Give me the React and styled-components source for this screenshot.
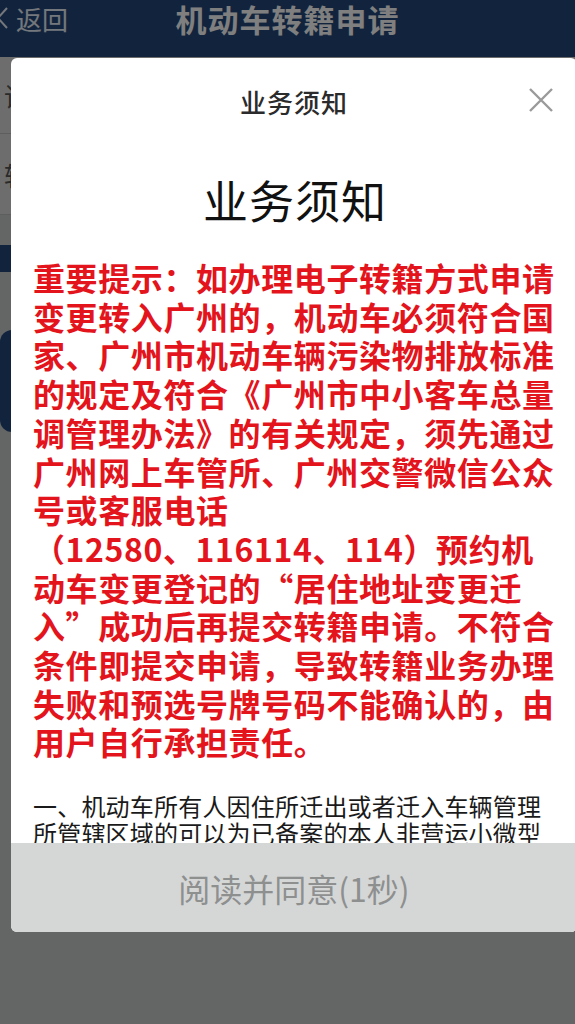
import React from "react";
import styled, { createGlobalStyle } from "styled-components";

const GlobalStyle = createGlobalStyle`
  html, body {
    margin: 0;
    padding: 0;
    height: 100%;
    overflow: hidden;
  }
  body {
    font-family: "Noto Sans CJK SC", "Noto Sans", sans-serif;
    background: #c9cbcb;
  }
`;

const Page = styled.div`
  width: 575px;
  height: 1024px;
  background: #c9cbcb;
  overflow: hidden;
  position: relative;
`;

const TopBar = styled.div`
  height: 57px;
  background: #24487a;
  display: flex;
  align-items: center;
  justify-content: center;
  position: relative;
  color: #ffffff;
`;

const Back = styled.div`
  position: absolute;
  left: -4px;
  top: 0;
  height: 36px;
  display: flex;
  align-items: center;
  gap: 6px;
  font-size: 26px;
  color: #e8eef7;
`;

const PageTitle = styled.h1`
  margin: 0 0 0 0;
  margin-top: -20px;
  font-size: 31px;
  font-weight: 700;
  letter-spacing: 1px;
  color: #ffffff;
`;

const Row = styled.div`
  height: ${(p) => p.h}px;
  background: #dadada;
  border-bottom: 1px solid #bcbcbc;
  display: flex;
  align-items: center;
  padding-left: 4px;
  font-size: 26px;
  color: #555;
`;

const Band = styled.div`
  height: 27px;
  margin-top: 30px;
  background: #24487a;
`;

const PageButton = styled.div`
  height: 102px;
  margin-top: 58px;
  background: #24487a;
  border-radius: 12px;
`;

const Overlay = styled.div`
  position: absolute;
  inset: 0;
  background: rgba(0, 0, 0, 0.5);
`;

const Modal = styled.div`
  position: absolute;
  left: 11px;
  top: 58px;
  width: 566px;
  height: 874px;
  background: #ffffff;
  border-radius: 6px;
  display: flex;
  flex-direction: column;
  overflow: hidden;
`;

const ModalHead = styled.div`
  height: 86px;
  flex-shrink: 0;
  display: flex;
  align-items: center;
  justify-content: center;
  position: relative;
`;

const ModalTitle = styled.div`
  font-size: 26px;
  font-weight: 500;
  color: #2b2b2b;
  letter-spacing: 1px;
  margin-top: 0px;
`;

const Close = styled.div`
  position: absolute;
  right: 22px;
  top: 28px;
  width: 28px;
  height: 28px;
`;

const Body = styled.div`
  flex: 1;
  overflow: hidden;
  padding: 0 20px 0 22px;
`;

const BigTitle = styled.h2`
  margin: 26px 0 0 0;
  text-align: center;
  font-size: 45px;
  line-height: 60px;
  font-weight: 400;
  color: #111;
  letter-spacing: 1px;
`;

const Notice = styled.div`
  margin-top: 28px;
  color: #e3141c;
  font-size: 32px;
  font-weight: 700;
  line-height: 38.7px;
  letter-spacing: 0.6px;
`;

const Line = styled.div`
  white-space: nowrap;
  margin-left: ${(p) => p.indent || 0}px;
`;

const Text = styled.div`
  margin-top: 31px;
  font-size: 24px;
  line-height: 27px;
  color: #1a1a1a;
  letter-spacing: 0.2px;
`;

const Agree = styled.button`
  flex-shrink: 0;
  height: 89px;
  border: none;
  background: #d5d7d7;
  color: #8e8f8f;
  font-family: inherit;
  font-size: 32px;
  font-weight: 400;
  display: flex;
  align-items: center;
  justify-content: center;
  padding: 0;
`;

const notice = [
  "重要提示：如办理电子转籍方式申请",
  "变更转入广州的，机动车必须符合国",
  "家、广州市机动车辆污染物排放标准",
  "的规定及符合《广州市中小客车总量",
  "调管理办法》的有关规定，须先通过",
  "广州网上车管所、广州交警微信公众",
  "号或客服电话",
  "（12580、116114、114）预约机",
  "动车变更登记的“居住地址变更迁",
  "入”成功后再提交转籍申请。不符合",
  "条件即提交申请，导致转籍业务办理",
  "失败和预选号牌号码不能确认的，由",
  "用户自行承担责任。",
];

const body = [
  "一、机动车所有人因住所迁出或者迁入车辆管理",
  "所管辖区域的可以为已备案的本人非营运小微型",
];

export default function App() {
  return (
    <>
      <GlobalStyle />
      <Page>
        <TopBar>
          <Back>
            <svg width="14" height="24" viewBox="0 0 14 24">
              <path d="M11 2 L2 12 L11 22" fill="none" stroke="#e8eef7" strokeWidth="2" />
            </svg>
            返回
          </Back>
          <PageTitle>机动车转籍申请</PageTitle>
        </TopBar>
        <Row h={76}>请</Row>
        <Row h={80}>转</Row>
        <Band />
        <PageButton />
        <Overlay />
        <Modal>
          <ModalHead>
            <ModalTitle>业务须知</ModalTitle>
            <Close>
              <svg width="28" height="28" viewBox="0 0 28 28">
                <path d="M3 3 L25 25 M25 3 L3 25" stroke="#9a9a9a" strokeWidth="2.4" />
              </svg>
            </Close>
          </ModalHead>
          <Body>
            <BigTitle>业务须知</BigTitle>
            <Notice>
              {notice.map((t, i) => (
                <Line key={i}>{t}</Line>
              ))}
            </Notice>
            <Text>
              {body.map((t, i) => (
                <Line key={i}>{t}</Line>
              ))}
            </Text>
          </Body>
          <Agree>阅读并同意(1秒)</Agree>
        </Modal>
      </Page>
    </>
  );
}
